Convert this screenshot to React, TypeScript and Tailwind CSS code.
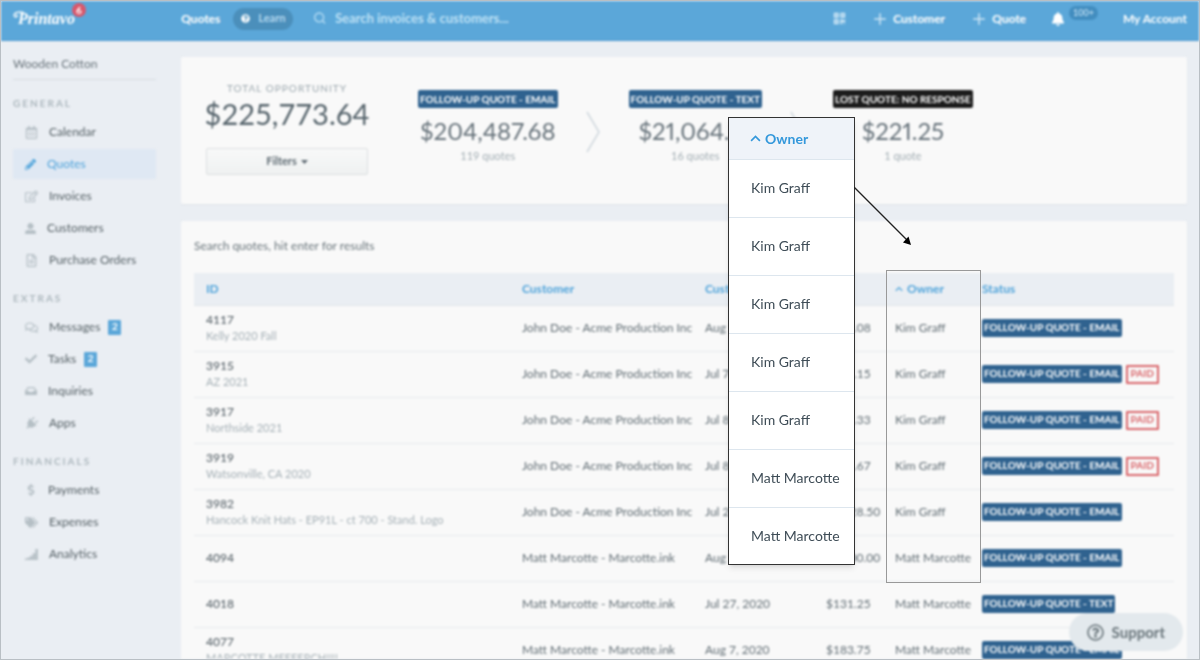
import type { ReactNode } from "react";
import {
  FaBell,
  FaCheck,
  FaInbox,
  FaPencilAlt,
  FaPlug,
  FaQuestionCircle,
  FaRegCalendarAlt,
  FaRegComments,
  FaRegEdit,
  FaRegFileAlt,
  FaRegQuestionCircle,
  FaTags,
  FaUserAlt,
  FaDollarSign,
  FaQrcode,
} from "react-icons/fa";
import { Search, Plus } from "lucide-react";

function Signal() {
  return (
    <svg width="13" height="11" viewBox="0 0 13 11" fill="currentColor" aria-hidden="true">
      <path d="M0 9.500h2.400V11H0zM2.600 8.400H5V11H2.600zM5.200 6.800h2.400V11H5.200zM7.800 4.200h2.400V11H7.800zM10.400 0h2.400v11h-2.400z" />
    </svg>
  );
}

type Item = { label: string; icon: ReactNode; active?: boolean; count?: number };

const groups: { title: string; items: Item[] }[] = [
  {
    title: "GENERAL",
    items: [
      { label: "Calendar", icon: <FaRegCalendarAlt size={13} /> },
      { label: "Quotes", icon: <FaPencilAlt size={11} />, active: true },
      { label: "Invoices", icon: <FaRegEdit size={13} /> },
      { label: "Customers", icon: <FaUserAlt size={11} /> },
      { label: "Purchase Orders", icon: <FaRegFileAlt size={13} /> },
    ],
  },
  {
    title: "EXTRAS",
    items: [
      { label: "Messages", icon: <FaRegComments size={13} />, count: 2 },
      { label: "Tasks", icon: <FaCheck size={12} />, count: 2 },
      { label: "Inquiries", icon: <FaInbox size={12} /> },
      { label: "Apps", icon: <FaPlug size={13} className="rotate-45" /> },
    ],
  },
  {
    title: "FINANCIALS",
    items: [
      { label: "Payments", icon: <FaDollarSign size={12} /> },
      { label: "Expenses", icon: <FaTags size={13} /> },
      { label: "Analytics", icon: <Signal /> },
    ],
  },
];

type Row = {
  id: string;
  name?: string;
  customer: string;
  due: string;
  total: string;
  owner: string;
  status: string;
  paid?: boolean;
};

const acme = "John Doe - Acme Production Inc";
const ink = "Matt Marcotte - Marcotte.ink";
const email = "FOLLOW-UP QUOTE - EMAIL";

const rows: Row[] = [
  { id: "4117", name: "Kelly 2020 Fall", customer: acme, due: "Aug 7, 2020", total: "$423.08", owner: "Kim Graff", status: email },
  { id: "3915", name: "AZ 2021", customer: acme, due: "Jul 7, 2020", total: "$311.15", owner: "Kim Graff", status: email, paid: true },
  { id: "3917", name: "Northside 2021", customer: acme, due: "Jul 8, 2020", total: "$448.33", owner: "Kim Graff", status: email, paid: true },
  { id: "3919", name: "Watsonville, CA 2020", customer: acme, due: "Jul 8, 2020", total: "$402.67", owner: "Kim Graff", status: email, paid: true },
  { id: "3982", name: "Hancock Knit Hats - EP91L - ct 700 - Stand. Logo", customer: acme, due: "Jul 24, 2020", total: "$1,128.50", owner: "Kim Graff", status: email },
  { id: "4094", customer: ink, due: "Aug 5, 2020", total: "$1,200.00", owner: "Matt Marcotte", status: email },
  { id: "4018", customer: ink, due: "Jul 27, 2020", total: "$131.25", owner: "Matt Marcotte", status: "FOLLOW-UP QUOTE - TEXT" },
  { id: "4077", name: "MARCOTTE MEFFERCH!!!!", customer: ink, due: "Aug 7, 2020", total: "$183.75", owner: "Matt Marcotte", status: email },
];

const owners = ["Kim Graff", "Kim Graff", "Kim Graff", "Kim Graff", "Kim Graff", "Matt Marcotte", "Matt Marcotte"];

function Caret({ size }: { size: number }) {
  return (
    <svg width={size} height={size} viewBox="0 0 10 10" fill="none" stroke="currentColor" strokeWidth="1.500" aria-hidden="true">
      <path d="M1 7.200 5 3.200l4 4" />
    </svg>
  );
}

function StatusTag({ children, dark }: { children: ReactNode; dark?: boolean }) {
  return (
    <span
      className={
        dark
          ? "inline-flex h-[18px] items-center whitespace-nowrap rounded-xs bg-[#1c1c1c] px-0.5 text-[10px] font-bold text-white"
          : "inline-flex h-[18px] items-center whitespace-nowrap rounded-xs bg-[#2f628f] px-0.5 text-[10px] font-bold text-white"
      }
    >
      {children}
    </span>
  );
}

function Stat({ tag, amount, note, dark }: { tag: string; amount: string; note: string; dark?: boolean }) {
  return (
    <div className="flex flex-col items-center">
      <StatusTag dark={dark}>{tag}</StatusTag>
      <div className="mt-[7px] text-2xl leading-8 text-[#66727a] proportional-nums">{amount}</div>
      <div className="mt-px text-[11px] leading-4 text-[#a3aeb4]">{note}</div>
    </div>
  );
}

function Step() {
  return (
    <svg width="14" height="42" viewBox="0 0 14 42" fill="none" stroke="#d0d8de" strokeWidth="1.500" className="mt-[21px] shrink-0" aria-hidden="true">
      <path d="M1 1 13 21 1 41" />
    </svg>
  );
}

function Header() {
  return (
    <header className="flex h-10 shrink-0 items-center border-b border-[#4f9bd0] bg-[#5ba7d9] px-3 pb-1 text-xs font-bold text-white">
      <a href="#home" className="relative w-[168px] pl-[5px] font-['Liberation_Serif',serif] text-base leading-6 italic">
        <svg className="absolute top-1 left-0" width="12" height="9" viewBox="0 0 12 9" fill="none" stroke="currentColor" strokeWidth="1.300" aria-hidden="true">
          <path d="M11 1.500C6 0 1 1.500 1 4.300c0 2 3 2.300 3.200.6C4.300 4 3.300 3.800 3 4.400" />
        </svg>
        Printavo
        <span className="absolute -top-1 left-[59px] flex h-[14px] w-[14px] items-center justify-center rounded-full bg-[#d9576b] font-[Lato,sans-serif] text-[10px] not-italic">
          6
        </span>
      </a>
      <a href="#quotes">Quotes</a>
      <button className="ml-[13px] flex h-[22px] items-center gap-2 rounded-full bg-[#4b8fbb] px-2 text-[11px] text-[#b4d8ef]">
        <FaQuestionCircle size={9} className="text-white" />
        Learn
      </button>
      <label className="ml-5 flex flex-1 items-center gap-2 text-[#b4dcf4]">
        <Search size={14} strokeWidth={2.5} />
        <input
          aria-label="Search invoices and customers"
          placeholder="Search invoices & customers..."
          className="w-full bg-transparent text-[13px] text-white outline-none placeholder:text-[#bde0f5]"
        />
      </label>
      <button aria-label="Scan code" className="mr-[25px] text-[#d3e9f7]">
        <FaQrcode size={13} />
      </button>
      <button className="mr-[25px] flex items-center gap-1">
        <Plus size={18} strokeWidth={2} className="text-[#cfe6f5]" />
        Customer
      </button>
      <button className="mr-[25px] flex items-center gap-1">
        <Plus size={18} strokeWidth={2} className="text-[#cfe6f5]" />
        Quote
      </button>
      <button aria-label="Notifications" className="mr-[25px] flex items-center gap-1">
        <FaBell size={14} />
        <span className="mb-3 flex h-[14px] items-center rounded-full bg-[#428dbf] px-1 text-[9px] text-[#b4d8ef]">100+</span>
      </button>
      <a href="#account">My Account</a>
    </header>
  );
}

function Sidebar() {
  return (
    <aside className="w-[180px] shrink-0 pt-[13px] pr-[25px] pl-3 text-xs text-[#566166]">
      <div className="border-b border-[#d8dde2] pb-[5px] leading-5 text-[#68737a]">Wooden Cotton</div>
      <nav className="pt-[15px]">
        {groups.map((g) => (
          <section key={g.title} className="mb-[14px]">
            <h2 className="mb-[5px] text-[10px] leading-4 font-bold tracking-[2px] text-[#adb8be]">{g.title}</h2>
            <ul className="flex flex-col">
              {g.items.map((it) => (
                <li key={it.label} className="py-px">
                  <a
                    href={"#" + it.label}
                    className={
                      it.active
                        ? "flex h-[30px] items-center rounded-xs bg-[#dfe8f3] pl-3 text-[#4ea3da]"
                        : "flex h-[30px] items-center pl-3"
                    }
                  >
                    <span className={it.active ? "mr-[11px]" : "mr-[11px] text-[#b5bfc5]"}>{it.icon}</span>
                    {it.label}
                    {it.count && (
                      <span className="ml-2 flex h-[15px] w-[13px] items-center justify-center rounded-[1px] bg-[#5ba7d9] text-[10px] font-bold text-white">
                        {it.count}
                      </span>
                    )}
                  </a>
                </li>
              ))}
            </ul>
          </section>
        ))}
      </nav>
    </aside>
  );
}

function Summary() {
  return (
    <section className="flex h-[147px] shrink-0 rounded-xs bg-[#f9f9f9] pl-[25px] shadow-xs">
      <div className="flex w-[162px] flex-col items-center pt-[23px]">
        <div className="text-[10px] leading-4 font-medium tracking-[1px] text-[#a3aeb4]">TOTAL OPPORTUNITY</div>
        <div className="text-[29px] leading-9 text-[#56646c]">$225,773.64</div>
        <button className="mt-4 flex h-[27px] w-full items-center justify-center gap-1 rounded-xs border border-[#dcdfe1] bg-linear-to-b from-[#f8f9f9] to-[#eff1f1] text-[11px] font-bold text-[#5f6b73]">
          Filters
          <svg width="7" height="4" viewBox="0 0 7 4" fill="currentColor" aria-hidden="true">
            <path d="M0 0h7L3.500 4z" />
          </svg>
        </button>
      </div>
      <div className="flex pt-[33px] pl-[50px]">
        <Stat tag={email} amount="$204,487.68" note="119 quotes" />
        <div className="flex w-[71px] justify-center">
          <Step />
        </div>
        <Stat tag="FOLLOW-UP QUOTE - TEXT" amount="$21,064.61" note="16 quotes" />
        <div className="flex w-[71px] justify-center">
          <Step />
        </div>
        <Stat tag="LOST QUOTE: NO RESPONSE" amount="$221.25" note="1 quote" dark />
      </div>
    </section>
  );
}

function Quotes() {
  return (
    <section className="mt-[17px] flex-1 rounded-xs bg-[#f9f9f9] px-[13px] pt-[14px] shadow-xs">
      <input
        aria-label="Search quotes"
        placeholder="Search quotes, hit enter for results"
        className="mb-[17px] block h-[21px] w-full bg-transparent text-xs outline-none placeholder:text-[#68747a]"
      />
      <table className="w-full table-fixed text-left text-xs text-[#616d74]">
        <colgroup>
          <col />
          <col className="w-[183px]" />
          <col className="w-[121px]" />
          <col className="w-[69px]" />
          <col className="w-[87px]" />
          <col className="w-[204px]" />
        </colgroup>
        <thead>
          <tr className="h-8 border-b border-[#e1e6ea] bg-[#eaeef3] text-[#4ea3da]">
            <th className="pl-3">ID</th>
            <th className="pl-3">Customer</th>
            <th className="pl-3">Customer Due</th>
            <th className="pl-3">Total</th>
            <th className="pl-3">
              <span className="flex items-center gap-1">
                <Caret size={8} />
                Owner
              </span>
            </th>
            <th className="pl-3">Status</th>
          </tr>
        </thead>
        <tbody>
          {rows.map((r) => (
            <tr key={r.id} className="h-[46px] border-b border-[#e6eaec]">
              <td className="pl-3 whitespace-nowrap">
                <div className="leading-4 font-medium text-[#566168]">{r.id}</div>
                {r.name && <div className="text-[11px] leading-4 text-[#a5b0b6]">{r.name}</div>}
              </td>
              <td className="pl-3 whitespace-nowrap">{r.customer}</td>
              <td className="pl-3 whitespace-nowrap">{r.due}</td>
              <td className="pl-3">{r.total}</td>
              <td className="pl-3 whitespace-nowrap">{r.owner}</td>
              <td className="pl-3">
                <div className="flex items-center gap-1">
                  <StatusTag>{r.status}</StatusTag>
                  {r.paid && (
                    <span className="flex h-[19px] items-center rounded-[1px] border-2 border-[#d9666b] px-[3px] text-[10px] font-bold text-[#d9666b]">
                      PAID
                    </span>
                  )}
                </div>
              </td>
            </tr>
          ))}
        </tbody>
      </table>
    </section>
  );
}

function OwnerPopup() {
  return (
    <div className="absolute top-[116px] left-[727px] w-[127px] border border-[#333] bg-white text-[14px] text-[#3f4d57] shadow-md">
      <div className="flex h-[42px] items-center gap-1 border-b border-[#dde6ee] bg-[#eff3f9] pl-[21px] font-bold text-[#3498db]">
        <Caret size={11} />
        Owner
      </div>
      {owners.map((o, i) => (
        <div key={i} className="flex h-[58px] items-center border-b border-[#dde6ee] pb-0.5 pl-[22px] last:h-14 last:border-b-0">
          {o}
        </div>
      ))}
    </div>
  );
}

export default function App() {
  return (
    <div className="relative h-screen overflow-hidden border border-[#b9bfc4] bg-[#eaeef3] font-[Lato,sans-serif]">
      <div className="flex h-full flex-col blur-[1px]">
        <Header />
        <div className="flex min-h-0 flex-1">
          <Sidebar />
          <main className="flex min-w-0 flex-1 flex-col overflow-hidden pt-4 pr-3">
            <Summary />
            <Quotes />
          </main>
        </div>
        <button className="absolute right-4 bottom-2 flex h-[38px] items-center gap-2 rounded-full bg-[#e3e9ed] px-[18px] text-[15px] font-bold text-[#69757b]">
          <FaRegQuestionCircle size={17} />
          Support
        </button>
      </div>
      <div className="absolute top-[269px] left-[885px] h-[313px] w-[95px] border border-[#999]" />
      <OwnerPopup />
      <svg className="absolute top-[184px] left-[853px]" width="62" height="64" viewBox="0 0 62 64" aria-hidden="true">
        <path d="M0 2 53 55" stroke="#222" strokeWidth="1.300" />
        <path d="M57 60 49 57.500 54.500 51.500z" fill="#000" />
      </svg>
    </div>
  );
}
